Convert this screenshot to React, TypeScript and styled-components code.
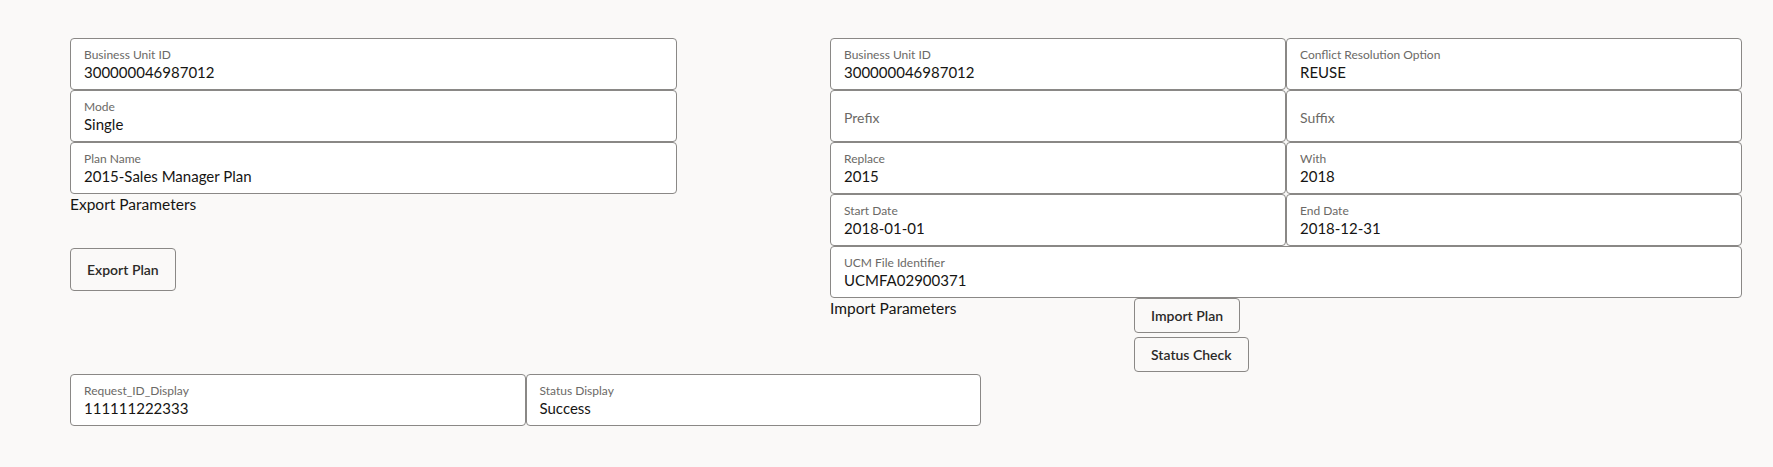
import styled, { createGlobalStyle } from 'styled-components'

/** data */
interface FieldData {
  label: string
  value?: string
  wide?: boolean
}

const exportFields: FieldData[] = [
  { label: 'Business Unit ID', value: '300000046987012' },
  { label: 'Mode', value: 'Single' },
  { label: 'Plan Name', value: '2015-Sales Manager Plan' },
]

const importFields: FieldData[] = [
  { label: 'Business Unit ID', value: '300000046987012' },
  { label: 'Conflict Resolution Option', value: 'REUSE' },
  { label: 'Prefix' },
  { label: 'Suffix' },
  { label: 'Replace', value: '2015' },
  { label: 'With', value: '2018' },
  { label: 'Start Date', value: '2018-01-01' },
  { label: 'End Date', value: '2018-12-31' },
  { label: 'UCM File Identifier', value: 'UCMFA02900371', wide: true },
]

const statusFields: FieldData[] = [
  { label: 'Request_ID_Display', value: '111111222333' },
  { label: 'Status Display', value: 'Success' },
]

const FormField = ({ label, value, wide }: FieldData) =>
  value ? (
    <Field $wide={wide}>
      <Label>{label}</Label>
      <Value>{value}</Value>
    </Field>
  ) : (
    <Field $wide={wide} $empty>
      <Placeholder>{label}</Placeholder>
    </Field>
  )

const App = () => {
  return (
    <>
      <GlobalStyle />
      <Page>
        <TopRow>
          <ExportPanel>
            <FieldGrid $cols={1}>
              {exportFields.map((f) => (
                <FormField key={f.label} {...f} />
              ))}
            </FieldGrid>
            <SectionTitle>Export Parameters</SectionTitle>
            <ExportActions>
              <ActionButton $tall>Export Plan</ActionButton>
            </ExportActions>
          </ExportPanel>
          <ImportPanel>
            <FieldGrid $cols={2}>
              {importFields.map((f) => (
                <FormField key={f.label} {...f} />
              ))}
            </FieldGrid>
            <ImportFooter>
              <SectionTitle>Import Parameters</SectionTitle>
              <ButtonStack>
                <ActionButton>Import Plan</ActionButton>
                <ActionButton>Status Check</ActionButton>
              </ButtonStack>
            </ImportFooter>
          </ImportPanel>
        </TopRow>
        <StatusRow>
          <FieldGrid $cols={2}>
            {statusFields.map((f) => (
              <FormField key={f.label} {...f} />
            ))}
          </FieldGrid>
        </StatusRow>
      </Page>
    </>
  )
}

const GlobalStyle = createGlobalStyle`
  body {
    margin: 0;
    background: #faf9f8;
    color: #161513;
    font-family: Lato, "Liberation Sans", sans-serif;
  }
`

const Page = styled.div`
  display: flex;
  flex-direction: column;
  gap: 2px;
  padding: 38px 0 0 70px;
`

const TopRow = styled.div`
  display: flex;
  align-items: flex-start;
  gap: 153px;
`

const ExportPanel = styled.section`
  width: 607px;
  display: flex;
  flex-direction: column;
`

const ImportPanel = styled.section`
  width: 912px;
  display: flex;
  flex-direction: column;
`

const FieldGrid = styled.div<{ $cols: number }>`
  display: grid;
  grid-template-columns: repeat(${({ $cols }) => $cols}, 1fr);
`

const Field = styled.div<{ $wide?: boolean; $empty?: boolean }>`
  box-sizing: border-box;
  height: 52px;
  display: flex;
  flex-direction: column;
  justify-content: ${({ $empty }) => ($empty ? 'center' : 'flex-start')};
  padding: ${({ $empty }) => ($empty ? '3px 12px 0 13px' : '8px 12px 0 13px')};
  background: #fff;
  border: 1px solid #8a8886;
  border-radius: 4px;
  grid-column: ${({ $wide }) => ($wide ? 'span 2' : 'auto')};
`

const Label = styled.span`
  font-size: 12px;
  line-height: 15px;
  color: #6b6966;
`

const Placeholder = styled.span`
  font-size: 14px;
  line-height: 18px;
  color: #6b6966;
`

const Value = styled.span`
  font-size: 15px;
  line-height: 20px;
  color: #161513;
`

const SectionTitle = styled.div`
  font-size: 15.5px;
  line-height: 20px;
  color: #161513;
`

const ExportActions = styled.div`
  display: flex;
  padding-top: 34px;
`

const ImportFooter = styled.div`
  display: flex;
  align-items: flex-start;

  ${SectionTitle} {
    width: 304px;
  }
`

const ButtonStack = styled.div`
  display: flex;
  flex-direction: column;
  align-items: flex-start;
  gap: 4px;
`

const ActionButton = styled.button<{ $tall?: boolean }>`
  box-sizing: border-box;
  height: ${({ $tall }) => ($tall ? '43px' : '35px')};
  padding: 0 16px;
  background: #faf9f8;
  border: 1px solid #8a8886;
  border-radius: 4px;
  font-family: Lato, "Liberation Sans", sans-serif;
  font-size: 14px;
  font-weight: 600;
  color: #2b2a28;
  cursor: pointer;
`

const StatusRow = styled.div`
  width: 911px;
`

export default App
